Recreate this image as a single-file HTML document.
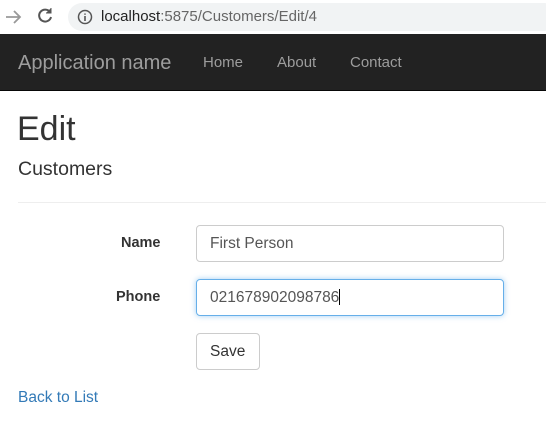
<!DOCTYPE html>
<html><head><style>
body{margin:0;width:546px;height:430px;overflow:hidden;background:#fff;font-family:"Liberation Sans",sans-serif;color:#333;position:relative}
.a{position:absolute}
</style></head><body>
<div class="a" style="left:0;top:0;width:546px;height:34px;background:#fff"></div>
<svg class="a" style="top:8px;left:4px" width="20" height="18"><path d="M2 9H16M10 3L16 9L10 15" stroke="#999" stroke-width="1.8" fill="none"/></svg>
<svg class="a" style="left:36px;top:7px" width="18" height="18"><path d="M14 5A6 6 0 1 0 15 10" stroke="#555" stroke-width="2" fill="none"/><path d="M15 1V6H10" fill="#555" stroke="#555" stroke-width="1"/></svg>
<div class="a" style="left:68px;top:3px;width:490px;height:28px;border-radius:14px;background:#f1f3f4"></div>
<svg class="a" style="left:77px;top:9px" width="16" height="16"><circle cx="8" cy="8" r="6.5" stroke="#555" stroke-width="1.5" fill="none"/><path d="M8 7V12M8 4.5V5.8" stroke="#555" stroke-width="1.6"/></svg>
<div class="a" style="left:101px;top:8px;font-size:15px;color:#666"><span style="color:#222">localhost</span>:5875/Customers/Edit/4</div>
<div class="a" style="left:0;top:34px;width:546px;height:56px;background:#222;border-bottom:1px solid #080808"></div>
<div class="a" style="left:18px;top:52px;font-size:20px;color:#9d9d9d">Application name</div>
<div class="a" style="left:203px;top:54px;font-size:15px;color:#9d9d9d">Home</div>
<div class="a" style="left:277px;top:54px;font-size:15px;color:#9d9d9d">About</div>
<div class="a" style="left:350px;top:54px;font-size:15px;color:#9d9d9d">Contact</div>
<div class="a" style="left:17px;top:110px;font-size:34px">Edit</div>
<div class="a" style="left:18px;top:158px;font-size:19.5px">Customers</div>
<div class="a" style="left:18px;top:202px;width:528px;height:1px;background:#eee"></div>
<div class="a" style="left:121px;top:235px;font-size:14.5px;font-weight:bold">Name</div>
<div class="a" style="left:116px;top:289px;font-size:14.5px;font-weight:bold">Phone</div>
<div class="a" style="left:196px;top:225px;width:308px;height:37px;border:1px solid #ccc;border-radius:4px;box-sizing:border-box"></div>
<div class="a" style="left:210px;top:235px;font-size:15.5px;color:#555">First Person</div>
<div class="a" style="left:196px;top:279px;width:308px;height:37px;border:1px solid #66afe9;border-radius:4px;box-sizing:border-box;box-shadow:0 0 6px rgba(102,175,233,.6)"></div>
<div class="a" style="left:210px;top:289px;font-size:15.5px;color:#555">021678902098786<span style="display:inline-block;width:1px;height:16px;background:#000;vertical-align:-3px"></span></div>
<div class="a" style="left:196px;top:333px;width:64px;height:37px;border:1px solid #ccc;border-radius:4px;box-sizing:border-box"></div>
<div class="a" style="left:210px;top:343px;font-size:15.5px">Save</div>
<div class="a" style="left:18px;top:389px;font-size:15.5px;color:#337ab7">Back to List</div>
</body></html>
